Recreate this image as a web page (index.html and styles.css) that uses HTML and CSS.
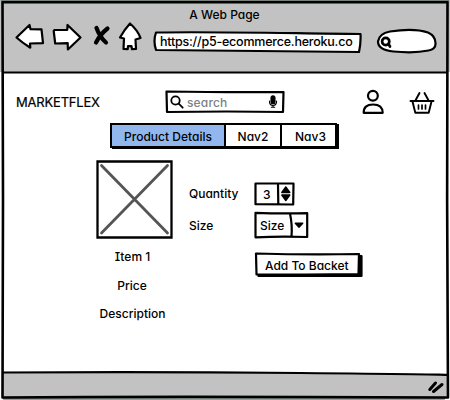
FILE: index.html
```html
<!DOCTYPE html>
<html lang="en">
<head>
<meta charset="utf-8">
<title>A Web Page</title>
<link rel="stylesheet" href="styles.css">
</head>
<body>
<div class="window">
  <header class="chrome">
    <div class="title">A Web Page</div>
    <div class="toolbar">
      <svg class="nav-icons" width="128" height="32" viewBox="14 21 128 32">
        <g class="arrow">
          <path d="M16.500 37.500 29.500 25l1 4.200 11 .2L43 43.200l-13 .3.300 4.200Q22 42.500 16.500 37.500Z"/>
          <path d="M80.500 37.500 67.500 25l-.2 4.800-12.800.2-.8 1 1.500 12.500 12.500-.3.200 6.300Z"/>
          <path d="M130 23.500q-5.500 6-10 14l4 1-.5 10.500 4.200.2.300-3h3.500l.5 3 4-.2-.5-9.500 5-1.500q-3-8-10.500-14.500Z"/>
        </g>
        <path class="stop" d="M96.500 28q3.500 9.500 9.500 14.500M107.500 28.500Q100.500 34 96 42.500"/>
      </svg>
      <div class="address">
        <svg class="outline" viewBox="0 0 210 24"><path d="M3 2.500C60 1.500 120 3 207.500 4Q208 13 206 22C150 22 80 20.500 3 20Q0 11 3 2.500Z"/></svg>
        <span class="url">https://p5-ecommerce.heroku.co</span>
      </div>
      <div class="quick-search">
        <svg class="outline" viewBox="0 0 62 28"><path d="M14 3.500Q38 0 52 4.500 59.500 8 59.500 15q.5 6-7 7.500-14 3-35 1Q2 22 2 13.500 3 5.500 14 3.500Z"/><circle class="lens" cx="9.700" cy="13.500" r="3.600"/><path class="lens" d="m12.500 16 1.500 2.500"/></svg>
      </div>
    </div>
  </header>

  <main class="page">
    <div class="site-bar">
      <div class="brand">MARKETFLEX</div>
      <div class="search">
        <svg class="outline" viewBox="0 0 122 26"><path d="M2.500 2.500Q65 3.500 119.500 3L119 23Q65 22 3 23Z"/></svg>
        <svg class="glyph" width="14" height="14" viewBox="0 0 14 14"><circle cx="5.500" cy="5.500" r="4.200"/><path d="m8.700 8.700 4 4"/></svg>
        <span class="hint">search</span>
        <svg class="mic" width="10" height="14" viewBox="0 0 10 14"><rect x="3" y=".8" width="4" height="8" rx="2"/><path d="M1.500 6v1.300Q2 10.300 5 10.500 8 10.300 8.500 7.300V6M5 10.500V12M3.300 12.300h3.400"/></svg>
      </div>
      <svg class="user" width="24" height="26" viewBox="0 0 24 26"><circle cx="11.900" cy="6.700" r="4.900"/><path d="M2.700 23.800Q2.500 15.500 12 15.500t9.700 8.300Z"/></svg>
      <svg class="basket" width="26" height="24" viewBox="0 0 26 24"><path d="M1.500 10h23M3.500 10.500l2.800 11.200h13.400L22.500 10.500M6.700 9l3.800-7M19.300 9l-3.800-7"/><path class="slats" d="M9.500 14v4M13 14v4M16.500 14v4"/></svg>
    </div>

    <nav class="tabs">
      <span class="tab tab-active">Product Details</span>
      <span class="tab tab-two">Nav2</span>
      <span class="tab tab-three">Nav3</span>
    </nav>

    <div class="product">
      <section class="item">
        <svg class="picture" width="77" height="79" viewBox="0 0 77 79"><path class="frame" d="M1.500 1.500h74v76h-74Z"/><path class="cross" d="m5.500 5.500 66 67.500M71.500 5.500 5.500 73"/></svg>
        <div class="name">Item 1</div>
        <div class="price">Price</div>
        <div class="desc">Description</div>
      </section>
      <section class="options">
        <div class="row">
          <span class="label label-qty">Quantity</span>
          <div class="stepper">
            <svg class="outline" viewBox="0 0 42 25"><path d="M1.500 1.500h38l-.3 21L1.500 22.200ZM24 2l.3 20.500"/><path class="solid" d="m31.800 5 4 5.500h-8Zm-4 8h8l-4 5.500Z"/></svg>
            <span class="value">3</span>
          </div>
        </div>
        <div class="row row-size">
          <span class="label">Size</span>
          <div class="select">
            <svg class="outline" viewBox="0 0 55 28"><path d="M1.500 1.800q26 1 51.700.3L53.200 26Q27 25 1.500 26.300ZM36 2.500q2.500 12 1.500 23"/><path class="solid" d="M41.300 12.200h7.400L45 16.200Z"/></svg>
            <span class="value">Size</span>
          </div>
        </div>
        <div class="buy">
          <svg class="outline" viewBox="0 0 109 28"><path class="shade" d="M105 4h2.500v20H4.500V22.500H105Z"/><path d="M2 1.500Q55 3 105 2L104.500 22Q50 22.500 2.500 22.500Z"/></svg>
          <span class="action">Add To Backet</span>
        </div>
      </section>
    </div>
  </main>

  <footer class="status"></footer>

  <svg class="window-frame" width="450" height="400" viewBox="0 0 450 400">
    <path class="haze" d="M2 1H448M4 398.500h440"/>
    <path class="status-fill" d="M3 373 225 373 447 375V398H3Z"/>
    <path d="M2.500 2.300H447.500Q446.500 200 448 397.500Q150 396 2.500 397.500Q3.500 200 2.500 2.300Z"/>
    <path class="divider" d="M3 72.500H447M3 372.500Q150 371.500 300 373T447 375"/>
    <path class="grip" d="m429.800 389.500 5.700-6.500M433.500 391.500l8.500-7"/>
  </svg>
</div>
</body>
</html>
```
FILE: styles.css
```css
* { box-sizing: border-box; }
body {
  margin: 0;
  font: 500 12px/16px Inter, "Noto Sans", sans-serif;
  font-feature-settings: "cv11", "cv08";
  color: #000;
  background: #fff;
}
.window { position: relative; width: 450px; height: 400px; display: flex; flex-direction: column; overflow: hidden; }
.window svg { flex: none; fill: none; stroke: #000; stroke-width: 2.2; stroke-linejoin: round; stroke-linecap: round; }
.window-frame { position: absolute; inset: 0; pointer-events: none; }
.window .window-frame { stroke-width: 2.600; }
.haze { stroke: #777f79; }
.divider { stroke-width: 2.200; }
.status-fill { fill: #c2c2c2; stroke: none; }
.grip { stroke-width: 3; }

.chrome { flex: none; height: 72px; padding-top: 7px; background: #c2c2c2; }
.title { width: 449px; text-align: center; font-size: 12px; }
.toolbar { display: flex; align-items: flex-start; padding-left: 14px; margin-top: -2px; }
.arrow { fill: #fff; }
.stop { stroke-width: 4.200; }
.address, .quick-search, .search, .stepper, .select, .buy { position: relative; display: flex; align-items: center; }
.outline { position: absolute; left: 0; top: 0; width: 100%; height: 100%; fill: #fff !important; z-index: 0; }
.address { width: 210px; height: 24px; margin: 9px 0 0 11px; padding: 0 0 1px 7px; }
.url { position: relative; font-size: 12.5px; letter-spacing: -.22px; white-space: nowrap; }
.quick-search { width: 62px; height: 28px; margin: 7px 0 0 13px; }
.lens { stroke-width: 2.700; }

.page { flex: 1; }
.site-bar { display: flex; padding: 17px 0 0 16px; height: 49px; }
.brand { width: 148px; padding-top: 5px; font-size: 13px; font-weight: 400; letter-spacing: -.2px; -webkit-text-stroke: .2px #000; }
.search { width: 122px; height: 26px; padding: 0 8px 0 6px; }
.glyph, .hint, .mic { position: relative; }
.window .glyph { stroke-width: 1.800; }
.hint { flex: 1; margin-left: 3px; padding-top: 1px; letter-spacing: .15px; color: #808088; }
.window .mic { stroke-width: 1.100; }
.mic rect { fill: #000; }
.window .user { margin-left: 75px; }
.window .basket { margin: 2px 0 0 24px; stroke-width: 1.900; }
.slats { stroke-width: 1.700; }

.tabs { display: flex; width: 227px; height: 25px; margin: 2px 0 0 110px; border: 2px solid #000; box-shadow: 2px 1px 0 #000; }
.tab { display: flex; align-items: center; justify-content: center; height: 21px; padding-top: 2px; }
.tab + .tab { border-left: 2px solid #000; }
.tab-active { width: 112px; background: #92b7ef; }
.tab-two { width: 56px; }
.tab-three { flex: 1; padding-left: 4px; }

.product { display: flex; padding: 12px 0 0 96px; }
.item { width: 77px; display: flex; flex-direction: column; align-items: center; }
.picture .frame { stroke-width: 2.300; stroke-linejoin: miter; }
.picture .cross { stroke: #555; stroke-width: 2.800; }
.name { margin: 10px 4px 0 0; }
.price { margin: 13px 5px 0 0; }
.desc { margin: 12px 0 0 -4px; }
.options { margin: 21px 0 0 16px; }
.row { display: flex; align-items: center; height: 26px; }
.row-size { height: 30px; margin-top: 3px; }
.row-size .label, .row-size .value { padding-top: 2px; }
.label { width: 65px; }
.stepper { width: 42px; height: 25px; padding-left: 9px; }
.select { width: 55px; height: 28px; padding-left: 6px; }
.value, .action { position: relative; }
.stepper .value { padding-top: 1px; }
.solid { fill: #000; stroke-width: 1.400; }
.buy { width: 109px; height: 28px; margin: 12px 0 0 65px; padding: 0 0 1px 11px; }
.shade { fill: #000; }
.status { flex: none; height: 28px; }
```
